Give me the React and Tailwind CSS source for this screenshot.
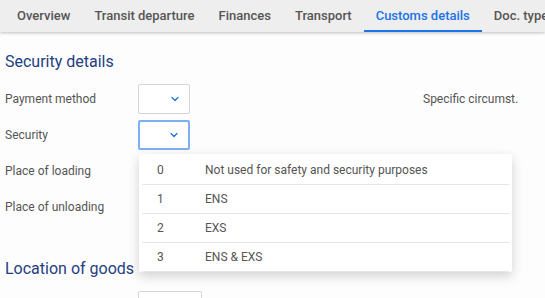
import { ChevronDown } from 'lucide-react';

const tabs = ['Overview', 'Transit departure', 'Finances', 'Transport', 'Customs details', 'Doc. type'];

const options = [
  { code: '0', label: 'Not used for safety and security purposes' },
  { code: '1', label: 'ENS' },
  { code: '2', label: 'EXS' },
  { code: '3', label: 'ENS & EXS' },
];

function Select({ focused }) {
  return (
    <div
      className={`w-[52px] h-[30px] flex items-center justify-end pr-[8px] bg-white rounded-[2px] ${
        focused ? 'border-2 border-[#7fb0ee]' : 'border border-[#d6d6d6]'
      }`}
    >
      <ChevronDown className="w-[12px] h-[12px] text-[#1a73e8]" strokeWidth={2.5} />
    </div>
  );
}

export default function App() {
  return (
    <div className="relative w-[545px] h-[298px] overflow-hidden bg-[#fdfdfd] font-['Roboto',sans-serif]">
      {/* Tab bar */}
      <div className="h-[32px] bg-[#eeeeee] flex items-stretch pl-[5px] shadow-[0_1px_3px_rgba(0,0,0,0.25)] relative z-10 whitespace-nowrap">
        {tabs.map((t) => (
          <div
            key={t}
            className={`px-[12px] flex items-center text-[13px] font-medium border-b-2 pt-[1px] ${
              t === 'Customs details' ? 'text-[#1a73e8] border-[#1a73e8]' : 'text-[#555555] border-transparent'
            }`}
          >
            {t}
          </div>
        ))}
      </div>

      {/* Security details */}
      <div className="pl-[5px]">
        <h2 className="mt-[18px] text-[16px] leading-[24px] text-[#1f3f7f]">Security details</h2>
        <div className="mt-[7px] text-[12px] text-[#555555]">
          <div className="flex items-center h-[36px]">
            <span className="w-[133px]">Payment method</span>
            <Select />
            <span className="ml-[233px]">Specific circumst.</span>
          </div>
          <div className="flex items-center h-[36px]">
            <span className="w-[133px]">Security</span>
            <Select focused />
          </div>
          <div className="flex items-center h-[36px]">
            <span className="w-[133px]">Place of loading</span>
          </div>
          <div className="flex items-center h-[36px]">
            <span className="w-[133px]">Place of unloading</span>
          </div>
        </div>

        <h2 className="mt-[32px] text-[16px] leading-[24px] text-[#1f3f7f]">Location of goods</h2>
        <div className="mt-[10px] ml-[133px] w-[64px] h-[30px] border border-[#d6d6d6] bg-white rounded-[2px]" />
      </div>

      {/* Dropdown menu */}
      <div className="absolute left-[139px] top-[154px] w-[373px] bg-white rounded-[2px] shadow-[0_4px_12px_rgba(0,0,0,0.18)] z-20 px-[3px] pt-[2px]">
        {options.map((o) => (
          <div key={o.code} className="flex items-center h-[29px] border-b border-[#e6e6e6] text-[12px] text-[#555555]">
            <span className="w-[63px] pl-[15px]">{o.code}</span>
            <span>{o.label}</span>
          </div>
        ))}
      </div>
    </div>
  );
}
